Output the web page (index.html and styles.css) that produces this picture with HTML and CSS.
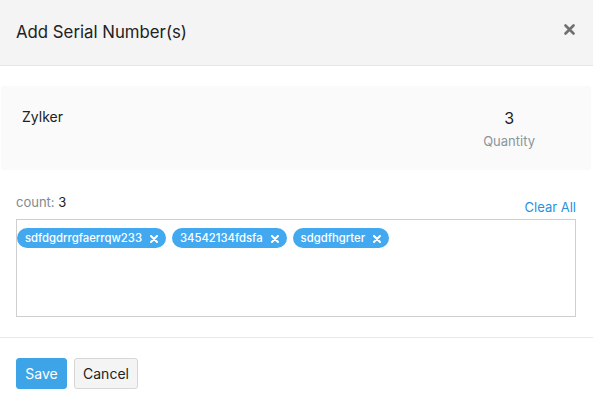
FILE: index.html
```html
<!DOCTYPE html>
<html>
<head>
<meta charset="utf-8">
<link rel="stylesheet" href="styles.css">
</head>
<body>
<div class="modal">
  <div class="header">
    <div class="title">Add Serial Number(s)</div>
    <svg class="close" width="11" height="11" viewBox="0 0 11 11"><path d="M1.5 1.5 L9.5 9.5 M9.5 1.5 L1.5 9.5" stroke="#707070" stroke-width="2.6" stroke-linecap="round"/></svg>
  </div>
  <div class="info">
    <div class="item">Zylker</div>
    <div class="qty">
      <div class="qty-num">3</div>
      <div class="qty-label">Quantity</div>
    </div>
  </div>
  <div class="count-row">
    <div class="count"><span class="count-label">count:</span> 3</div>
    <a class="clear">Clear All</a>
  </div>
  <div class="tagbox">
    <span class="tag">sdfdgdrrgfaerrqw233<svg class="tag-x" width="8" height="8" viewBox="0 0 8 8"><path d="M1 1 L7 7 M7 1 L1 7" stroke="#fff" stroke-width="2" stroke-linecap="round"/></svg></span>
    <span class="tag">34542134fdsfa<svg class="tag-x" width="8" height="8" viewBox="0 0 8 8"><path d="M1 1 L7 7 M7 1 L1 7" stroke="#fff" stroke-width="2" stroke-linecap="round"/></svg></span>
    <span class="tag">sdgdfhgrter<svg class="tag-x" width="8" height="8" viewBox="0 0 8 8"><path d="M1 1 L7 7 M7 1 L1 7" stroke="#fff" stroke-width="2" stroke-linecap="round"/></svg></span>
  </div>
  <div class="footer">
    <button class="btn btn-primary">Save</button>
    <button class="btn btn-default">Cancel</button>
  </div>
</div>
</body>
</html>
```
FILE: styles.css
```css
html, body {
  margin: 0;
  padding: 0;
  background: #fff;
}
body {
  font-family: Inter, "Noto Sans", "Liberation Sans", sans-serif;
  font-size: 14px;
  color: #222;
  width: 593px;
  height: 406px;
  overflow: hidden;
}
.header {
  height: 65px;
  background: #f4f4f4;
  border-bottom: 1px solid #e6e6e6;
  display: flex;
  align-items: center;
  justify-content: space-between;
  padding: 0 18px 0 16px;
}
.title {
  font-size: 16.8px;
  color: #222;
  padding-bottom: 2px;
}
.close {
  display: block;
  margin-top: -6px;
}
.info {
  margin: 20px 2px 0 1px;
  height: 84px;
  background: #fafafa;
  display: flex;
  justify-content: space-between;
  align-items: flex-start;
  padding: 0 56px 0 21px;
  box-sizing: border-box;
}
.item {
  margin-top: 22px;
  font-size: 14px;
}
.qty {
  margin-top: 22px;
  text-align: center;
}
.qty-num {
  font-size: 16px;
  line-height: 20px;
}
.qty-label {
  font-size: 13px;
  color: #8a969b;
  margin-top: 5px;
}
.count-row {
  display: flex;
  justify-content: space-between;
  align-items: flex-end;
  margin: 24px 17px 0 16px;
  height: 24px;
}
.count {
  font-size: 13px;
  line-height: 16px;
  align-self: flex-start;
  color: #222;
}
.count-label {
  color: #7f8a8f;
}
.clear {
  font-size: 13px;
  color: #2a8fe0;
  line-height: 16px;
  margin-bottom: 3px;
  cursor: pointer;
}
.tagbox {
  margin: 1px 17px 0 16px;
  height: 98px;
  box-sizing: border-box;
  border: 1px solid #cfcfcf;
  padding: 8px 0 0 0;
  display: flex;
  flex-wrap: wrap;
  align-content: flex-start;
  gap: 6px;
}
.tag {
  height: 20px;
  border-radius: 10px;
  background: #42a9f1;
  color: #fff;
  font-size: 11.3px;
  font-weight: 500;
  display: inline-flex;
  align-items: center;
  padding: 0 8px 0 8px;
  line-height: 20px;
}
.tag-x {
  display: block;
  margin-left: 8px;
  margin-top: 1px;
}
.footer {
  margin-top: 20px;
  border-top: 1px solid #e8e8e8;
  padding: 20px 16px 0 16px;
  display: flex;
  gap: 7px;
}
.btn {
  font-family: Inter, "Noto Sans", "Liberation Sans", sans-serif;
  font-size: 14px;
  height: 31px;
  border-radius: 3px;
  padding: 0 12px;
  cursor: pointer;
}
.btn-primary {
  background: #3ea4e8;
  border: 1px solid #3ea4e8;
  color: #fff;
  width: 51px;
  padding: 0;
}
.btn-default {
  background: #f4f4f4;
  border: 1px solid #d6d6d6;
  color: #222;
  width: 64px;
  padding: 0;
}
```
